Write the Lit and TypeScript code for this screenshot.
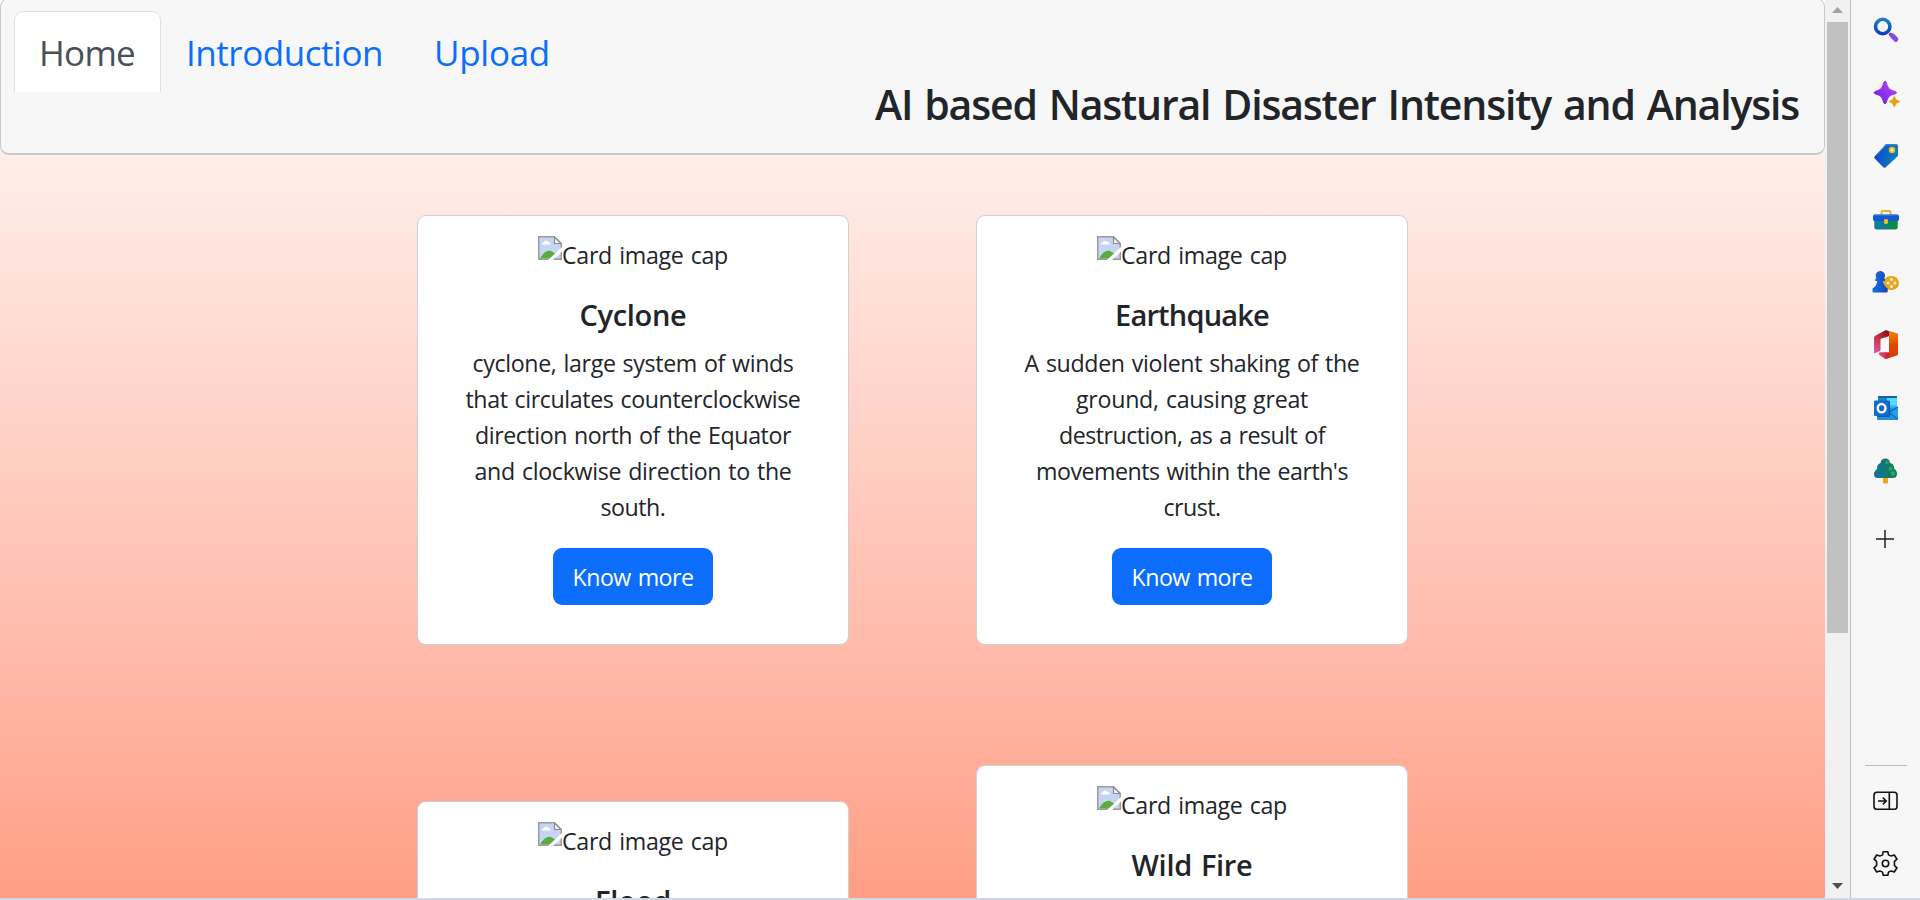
import { LitElement, html, css, svg, nothing } from "lit";
import { customElement, property } from "lit/decorators.js";

interface Line {
  text: string;
  width: number;
}

interface Disaster {
  title: Line;
  lines: Line[];
}

const CYCLONE: Disaster = {
  title: { text: "Cyclone", width: 107 },
  lines: [
    { text: "cyclone, large system of winds", width: 321 },
    { text: "that circulates counterclockwise", width: 335 },
    { text: "direction north of the Equator", width: 316 },
    { text: "and clockwise direction to the", width: 317 },
    { text: "south.", width: 65 },
  ],
};
const EARTHQUAKE: Disaster = {
  title: { text: "Earthquake", width: 154 },
  lines: [
    { text: "A sudden violent shaking of the", width: 335 },
    { text: "ground, causing great", width: 232 },
    { text: "destruction, as a result of", width: 266 },
    { text: "movements within the earth's", width: 312 },
    { text: "crust.", width: 57 },
  ],
};
const FLOOD: Disaster = { title: { text: "Flood", width: 76 }, lines: [] };
const WILDFIRE: Disaster = { title: { text: "Wild Fire", width: 121 }, lines: [] };

/* One run of text, tracked so that it takes up the given advance width. */
@customElement("fit-text")
class FitText extends LitElement {
  @property() text = "";
  @property({ type: Number }) width = 0;

  static styles = css`
    :host {
      display: inline-block;
      white-space: pre;
      word-spacing: 0.06em;
    }
  `;

  render() {
    return html`<span>${this.text}</span>`;
  }

  updated() {
    const span = this.renderRoot.querySelector("span") as HTMLElement;
    span.style.letterSpacing = "0px";
    const natural = span.getBoundingClientRect().width;
    span.style.letterSpacing = `${(this.width - natural) / this.text.length}px`;
  }
}

const fit = (l: Line) => html`<fit-text .text=${l.text} .width=${l.width}></fit-text>`;

@customElement("disaster-card")
class DisasterCard extends LitElement {
  @property({ attribute: false }) data!: Disaster;

  static styles = css`
    :host {
      display: block;
      box-sizing: border-box;
      width: 432px;
      height: 430px;
      border: 1px solid #cfd0d1;
      border-radius: 9px;
      background: #fff;
      padding-top: 20px;
      text-align: center;
      color: #212529;
    }
    .cap {
      display: flex;
      justify-content: center;
      height: 36px;
      line-height: 39px;
      font-size: 23.2px;
    }
    .cap svg {
      width: 24px;
      height: 24px;
    }
    .title {
      margin-top: 25px;
      height: 36px;
      line-height: 36px;
      font-size: 29px;
      font-weight: 600;
    }
    .body {
      margin-top: 12px;
      line-height: 37px;
      font-size: 23.2px;
    }
    .line {
      height: 36px;
    }
    .button {
      display: inline-flex;
      justify-content: center;
      align-items: center;
      margin-top: 23px;
      width: 160px;
      height: 57px;
      border-radius: 9px;
      background: #0d6efd;
      color: #fff;
      font-size: 23.2px;
      line-height: 36px;
    }
  `;

  render() {
    const { title, lines } = this.data;
    return html`
      <div class="cap">
        <svg viewBox="0 0 24 24">
          <path d="M1 1H17L23 7V23H1Z" fill="#c6d5f5" />
          <path d="M4 8.5a2 2 0 0 1 1.500-2 2.800 2.800 0 0 1 5-.5 2 2 0 0 1 2 2.500Z" fill="#fff" />
          <path d="M2 22.500C5 17 9 14 13 15L18 18V22.500Z" fill="#5aac3c" />
          <path d="M.75 24V.75H16.500L23.250 7.500V24" fill="none" stroke="#9b9b9b" stroke-width="1.500" />
          <path d="M.75 23.250H23.250" stroke="#9b9b9b" stroke-width="1.500" />
          <path d="M16.500 1V7.500H23Z" fill="#f4f4f4" stroke="#8d8d8d" stroke-width="1.200" />
          <path d="M24.500 10.500V15L14.500 24.500H9.500Z" fill="#fff" />
        </svg>
        ${fit({ text: "Card image cap", width: 166 })}
      </div>
      <div class="title">${fit(title)}</div>
      ${lines.length
        ? html`<div class="body">${lines.map((l) => html`<div class="line">${fit(l)}</div>`)}</div>
            <div class="button">${fit({ text: "Know more", width: 121 })}</div>`
        : nothing}
    `;
  }
}

const ICONS = [
  svg`<g transform="translate(0 -1)"><path d="M20.500 20.500 23 23" stroke="#54433c" stroke-width="3"/>
    <path d="M23.300 22.800 26.800 26.300" stroke="#8b45e8" stroke-width="5" stroke-linecap="round"/>
    <circle cx="13.700" cy="13.500" r="7.200" fill="#f7f7f7" stroke="url(#ring)" stroke-width="3.600"/></g>`,
  svg`<path d="M16 4Q17.200 4 18 8 19 12.300 23 13.500 27.700 14.500 27.700 15.700 27.700 16.800 23 17.700 19 19 18 23.300 17.200 27 16 27 14.800 27 14 23.300 13 19 9 17.700 5 16.800 5 15.700 5 14.500 9 13.500 13 12.300 14 8 14.800 4 16 4Z" fill="url(#spark)" stroke="url(#spark)"/>
    <path d="M25.300 19.200Q26 19.200 26.600 21.700 27.200 23 29 23.400 30.600 23.900 30.600 24.500 30.600 25.100 29 25.500 27.200 26 26.600 27.500 26 29.700 25.300 29.700 24.600 29.700 24 27.500 23.400 26 21.600 25.500 20.200 25.100 20.200 24.500 20.200 23.900 21.600 23.400 23.400 23 24 21.700 24.600 19.200 25.300 19.200Z" fill="#e5a312" stroke="#e5a312" stroke-width=".5"/>`,
  svg`<path d="M17 4H27Q29 4 29 6V16L16.700 27.300Q15.500 28.300 14.300 27.300L5.800 18.800Q4.600 17.500 5.800 16.200Z" fill="url(#tag)"/>
    <path d="M8 14.500 17.500 4.800H27.500" fill="none" stroke="#3a93da" stroke-width="1"/>
    <circle cx="23" cy="10" r="2.400" fill="#fff3c8" stroke="#f2b91b" stroke-width="1.700"/>`,
  svg`<path d="M12.500 13V9.500Q12.500 8 14 8H20Q21.500 8 21.500 9.500V13" fill="none" stroke="#eab029" stroke-width="2"/>
    <path d="M5.300 17H28.700V24Q28.700 26.500 26.200 26.500H7.800Q5.300 26.500 5.300 24Z" fill="url(#box)"/>
    <rect x="4" y="11.500" width="26" height="6.500" rx="1.800" fill="#1458cf"/>
    <path d="M5.500 12H28.500" stroke="#3b89e8"/>
    <rect x="15" y="16" width="4" height="5" rx="1.400" fill="#f1b72d"/>`,
  svg`<g transform="translate(0 1.500)"><rect x="14.500" y="8.500" width="15.500" height="14" rx="7" fill="#e7a51b"/>
    <circle cx="22.500" cy="12" r="1.500" fill="#fff3d5"/><circle cx="19" cy="15.500" r="1.500" fill="#fff3d5"/>
    <circle cx="26" cy="15.500" r="1.500" fill="#fff3d5"/><circle cx="22.500" cy="19" r="1.500" fill="#fff3d5"/>
    <path d="M11.300 3.500A4.600 4.600 0 0 1 15 11H16V13.500H14.300Q14.300 18 18.700 21V24Q18.700 25 17.500 25H4.500Q3.500 25 3.500 24V21Q8 18 8.200 13.500H6.300V11H7.600A4.600 4.600 0 0 1 11.300 3.500Z" fill="url(#pawn)"/></g>`,
  svg`<path d="M5 9Q5 7.500 6.300 6.700L17 1 20.500 2.500V7L11.500 10V21Q11.500 22 10.500 22.300L5 24.500Z" fill="url(#officeA)"/>
    <path d="M17 1 28 4.200Q29 4.500 29 5.500V25Q29 26 28 26.400L20 29V7L20.500 2.500Z" fill="url(#officeB)"/>
    <path d="M10 23.700 11 23.300H20V29L17.500 30Q16.500 30.200 15.500 29.500L9.800 25.500Z" fill="url(#officeC)"/>`,
  svg`<rect x="9" y="4" width="19" height="19" rx="1" fill="#38bdf0"/>
    <path d="M9 4H28V6H9Z" fill="#1261b5"/>
    <path d="M9 6H18V14H9Z" fill="#1686d9"/><path d="M18 6H28V13H18Z" fill="#52d9fb"/>
    <path d="M8 17 29 15V27Q29 28 28 28H9Q8 28 8 27Z" fill="#1c91df"/>
    <path d="M29 15 18 22 29 28Z" fill="#2a9ce4"/><path d="M29 15 20 20.500 28.500 27" fill="none" stroke="#1266bd" stroke-width="1.200"/>
    <rect x="8" y="9" width="13" height="15.700" rx="1" fill="#10477d"/>
    <rect x="5" y="8.500" width="15.500" height="15.500" rx="1.200" fill="#0f6ccb"/>
    <ellipse cx="12.600" cy="16.200" rx="3.900" ry="4.200" fill="none" stroke="#fff" stroke-width="2.400"/>`,
  svg`<rect x="14" y="22" width="5" height="6.500" rx="1" fill="#f3a716"/>
    <path d="M16.300 3.500Q20.500 3.500 21.200 8 25.500 9 25 13.500 28.300 15.500 28 19.500 27.500 23 24 23H9Q5 23 5 19.500 5 16 8.200 14 7.500 9.500 11.500 8 12 3.500 16.300 3.500Z" fill="url(#tree)"/>
    <circle cx="18" cy="7.500" r="2" fill="#3ca287" opacity=".7"/><circle cx="21.500" cy="13.500" r="2" fill="#45a97a" opacity=".7"/><circle cx="24" cy="18.500" r="2.200" fill="#45a97a" opacity=".7"/>`,
];

@customElement("app-root")
class AppRoot extends LitElement {
  static styles = css`
    :host {
      display: block;
      width: 1920px;
      height: 900px;
      overflow: hidden;
      font-family: "Open Sans", "Noto Sans", sans-serif;
      color: #212529;
      background: #cfd9ea;
    }
    .window {
      display: flex;
      height: 898px;
      overflow: hidden;
    }
    .page {
      width: 1825px;
      overflow: hidden;
      background: linear-gradient(#fffefd 0, #ffeee9 153px, #ffb9a9 660px, #ff9e85 898px);
    }
    .header {
      box-sizing: border-box;
      height: 157px;
      margin-top: -2px;
      border: 1px solid #c8c9ca;
      border-bottom-width: 2px;
      border-radius: 9px;
      background: #f7f7f7;
      padding: 12px 25px 0 13px;
    }
    .tabs {
      display: flex;
      font-size: 35px;
      line-height: 54px;
      color: #0d6efd;
    }
    .tab {
      box-sizing: border-box;
      height: 81px;
      padding: 14px 25px 0 24px;
      border: 1px solid transparent;
    }
    .tab.active {
      color: #495057;
      background: #fff;
      border-color: #dee2e6;
      border-bottom: 0;
      border-radius: 9px 9px 0 0;
    }
    .heading {
      margin-top: -13px;
      text-align: right;
      font-size: 41px;
      font-weight: 600;
      line-height: 50px;
    }
    .columns {
      display: flex;
      gap: 127px;
      padding: 60px 0 0 417px;
    }
    .column {
      display: flex;
      flex-direction: column;
      gap: 120px;
    }
    .column.wide {
      gap: 156px;
    }
    .scroll {
      box-sizing: border-box;
      width: 25px;
      display: flex;
      flex-direction: column;
      align-items: center;
      background: #f1f1f1;
    }
    .arrow {
      width: 11px;
      height: 6px;
      margin: 7px 0 9px;
    }
    .thumb {
      width: 21px;
      height: 611px;
      background: #c1c1c1;
    }
    .arrow.down {
      margin: auto 0 9px;
    }
    .side {
      box-sizing: border-box;
      width: 70px;
      border-left: 1px solid #bdbdbd;
      background: #f7f7f7;
      display: flex;
      flex-direction: column;
      align-items: center;
      padding: 14px 1px 0 0;
    }
    .icons {
      display: grid;
      gap: 31px;
    }
    .icon {
      display: block;
      width: 32px;
      height: 32px;
    }
    .plus {
      margin-top: 36px;
    }
    .rule {
      width: 42px;
      height: 1px;
      margin: auto 0 0 2px;
      background: #bdbdbd;
    }
    .panel {
      margin-top: 19px;
    }
    .gear {
      margin: 31px 0 18px;
    }
  `;

  render() {
    return html`
      <div class="window">
        <div class="page">
          <div class="header">
            <div class="tabs">
              <div class="tab active">${fit({ text: "Home", width: 96 })}</div>
              <div class="tab">${fit({ text: "Introduction", width: 197 })}</div>
              <div class="tab">${fit({ text: "Upload", width: 116 })}</div>
            </div>
            <div class="heading">
              ${fit({ text: "AI based Nastural Disaster Intensity and Analysis", width: 924 })}
            </div>
          </div>
          <div class="columns">
            <div class="column wide">
              <disaster-card .data=${CYCLONE}></disaster-card>
              <disaster-card .data=${FLOOD}></disaster-card>
            </div>
            <div class="column">
              <disaster-card .data=${EARTHQUAKE}></disaster-card>
              <disaster-card .data=${WILDFIRE}></disaster-card>
            </div>
          </div>
        </div>
        <div class="scroll">
          <svg class="arrow" viewBox="0 0 11 6"><path d="M0 6 5.500 0 11 6Z" fill="#a3a3a3" /></svg>
          <div class="thumb"></div>
          <svg class="arrow down" viewBox="0 0 11 6"><path d="M0 0 5.500 6 11 0Z" fill="#505050" /></svg>
        </div>
        <div class="side">
          <div class="icons">
            ${ICONS.map((shape) => html`<svg class="icon" viewBox="0 0 32 32">
              <defs>
                <linearGradient id="ring" x1="0" y1="0" x2="0" y2="1"><stop stop-color="#1d7cc8" /><stop offset="1" stop-color="#0d3fc4" /></linearGradient>
                <linearGradient id="spark" x1="1" y1="0" x2="0" y2="1"><stop stop-color="#c04df5" /><stop offset=".5" stop-color="#9232f0" /><stop offset="1" stop-color="#6a1fe0" /></linearGradient>
                <linearGradient id="tag" x1="0" y1=".4" x2="1" y2=".6"><stop stop-color="#1042cf" /><stop offset="1" stop-color="#0b86bd" /></linearGradient>
                <linearGradient id="box"><stop stop-color="#0d7bb0" /><stop offset="1" stop-color="#0c8a3d" /></linearGradient>
                <linearGradient id="pawn"><stop stop-color="#1d6fe0" /><stop offset="1" stop-color="#1547b8" /></linearGradient>
                <linearGradient id="officeA" x1=".8" y1="0" x2=".2" y2="1"><stop stop-color="#811010" /><stop offset=".5" stop-color="#c8323f" /><stop offset="1" stop-color="#d558a8" /></linearGradient>
                <linearGradient id="officeB" x1="0" y1="0" x2="0" y2="1"><stop stop-color="#f08c08" /><stop offset=".5" stop-color="#e04a05" /><stop offset="1" stop-color="#d83b06" /></linearGradient>
                <linearGradient id="officeC"><stop stop-color="#e8508c" /><stop offset="1" stop-color="#c4202c" /></linearGradient>
                <linearGradient id="tree" x1="0" y1="0" x2="1" y2="0"><stop stop-color="#14709b" /><stop offset="1" stop-color="#0e8248" /></linearGradient>
              </defs>
              ${shape}
            </svg>`)}
          </div>
          <svg class="icon plus" viewBox="0 0 32 32"><path d="M7 16H25M16 7V25" stroke="#222" stroke-width="1.500" /></svg>
          <div class="rule"></div>
          <svg class="icon panel" viewBox="0 0 32 32" fill="none" stroke="#111" stroke-width="1.600">
            <rect x="5" y="7.300" width="23" height="17" rx="2.800" />
            <path d="M20.300 7.300V24.300M9 16H17M13.800 12.600 17.200 16 13.800 19.400" />
          </svg>
          <svg class="icon gear" viewBox="0 0 32 32" fill="none" stroke="#111" stroke-width="1.600" stroke-linejoin="round">
            <circle cx="16.500" cy="15.500" r="3.200" />
            <path transform="translate(0 -.5)" d="M14.200 4.200H18.800L19.500 7.400Q21 8.300 22.200 8.500L25.300 7.500 28 11.700 25.500 13.900Q25.200 16 25.500 18.100L28 20.300 25.300 24.500 22.200 23.500Q21 23.700 19.500 24.600L18.800 27.800H14.200L13.500 24.600Q12 23.700 10.800 23.500L7.700 24.500 5 20.300 7.500 18.100Q7.800 16 7.500 13.900L5 11.700 7.700 7.500 10.800 8.500Q12 8.300 13.500 7.400Z" />
          </svg>
        </div>
      </div>
    `;
  }
}
